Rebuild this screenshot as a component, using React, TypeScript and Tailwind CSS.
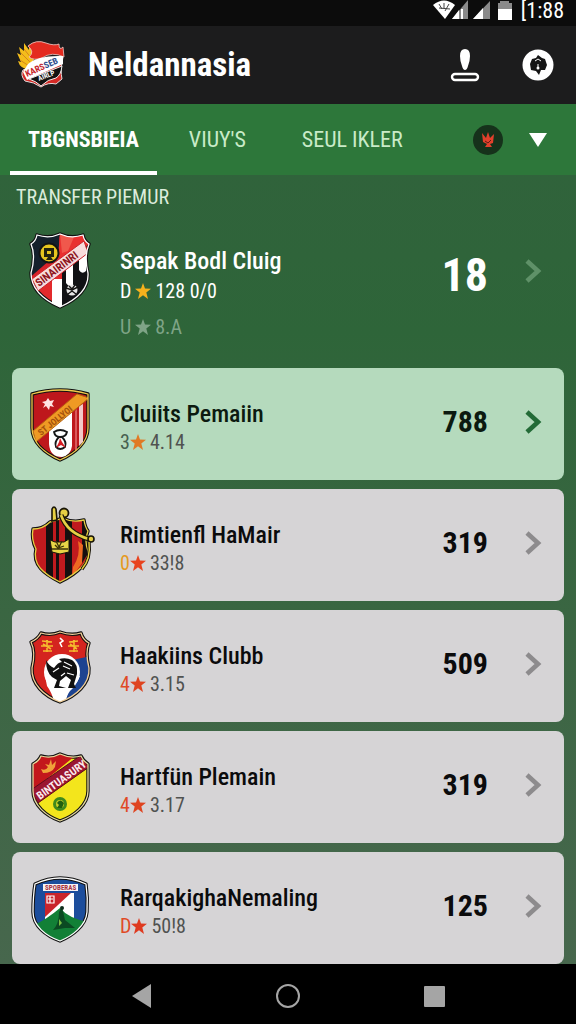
import React, { useState } from 'react';

type Tone = 'featured' | 'active' | 'plain';

interface Club {
  name: string;
  grade: string;
  gradeColor: string;
  starColor: string;
  rating: string;
  extra?: string[];
  score: string;
  tone: Tone;
  crest: React.ReactNode;
}

interface ShieldProps {
  id: string;
  path: string;
  base: string;
  outer?: string;
  inner?: string;
  children: React.ReactNode;
  over?: React.ReactNode;
}

function Shield({ id, path, base, outer = '#111', inner = '#fff', children, over }: ShieldProps) {
  return (
    <svg viewBox="0 0 64 80" className="h-20 w-16 shrink-0 overflow-visible" aria-hidden="true">
      <clipPath id={id}>
        <path d={path} />
      </clipPath>
      <path d={path} fill={base} stroke={outer} strokeWidth="3.4" strokeLinejoin="round" />
      <g clipPath={`url(#${id})`}>{children}</g>
      <path d={path} fill="none" stroke={inner} strokeWidth="1.3" strokeLinejoin="round" />
      {over}
    </svg>
  );
}

const SCALLOPED = 'M9 4Q21 8 32 3Q43 8 55 4Q56 10 61 13Q56 25 60 42C61 58 48 69 32 76C16 69 3 58 3 42Q8 25 3 13Q8 10 9 4Z';
const ROUNDED = 'M4 10Q18 6 32 6Q46 6 60 10V44C60 58 48 69 32 76C16 69 4 58 4 44Z';
const NOTCHED = 'M13 9Q23 12 32 7Q43 12 53 9Q55 14 60 17V44C60 58 46 69 32 74C18 69 5 58 5 44V17Q11 14 13 9Z';

function CrestSepak() {
  return (
    <Shield id="sepak" path={SCALLOPED} base="#e32a2c">
      <path d="M0 0H32L30 28L4 48H0Z" fill="#15202c" />
      <path d="M32 0L64 0V12L30 30Z" fill="#e9302f" />
      <path d="M32 3L46 6L40 20L34 22Z" fill="#f0584c" />
      <path d="M0 48L30 22L34 30L6 52Z" fill="#d8232a" />
      <path d="M24 48H34V80H24Z" fill="#fff" />
      <path d="M34 36L64 16V80H34Z" fill="#101114" />
      <path d="M38 36L45 31V54Q41 57 38 52Z" fill="#fff" />
      <path d="M51 28L58 22V40Q54 44 51 39Z" fill="#fff" />
      <path d="M4 48L56 10L60 22L10 60Z" fill="#f7dcdc" stroke="#c9242b" />
      <text transform="translate(11 56) rotate(-37)" fontSize="11" fontWeight="700" fill="#8d1420" fontFamily="Roboto Condensed, Roboto, sans-serif">
        SINAIRINRI
      </text>
      <circle cx="21" cy="22" r="9.5" fill="#e6c51f" stroke="#141414" strokeWidth="2" />
      <path d="M16 17H26V26H23L25 29H18L20 26H16ZM19 20V23H23V20Z" fill="#23230f" fillRule="evenodd" />
      <circle cx="44" cy="59" r="5.5" fill="#e8e8e8" />
      <path d="M38 57L44 59L50 56M40 63L44 60L48 63M41 55L44 58L47 54" stroke="#111" fill="none" strokeWidth="1.4" />
    </Shield>
  );
}

function CrestPemain() {
  return (
    <Shield id="pemain" path={ROUNDED} base="#be171c" inner="#f2c94c">
      <path d="M51 22L55 20V58L51 62Z" fill="#f3c9c9" />
      <path d="M47 27L49 25V66L47 68Z" fill="#d9595b" />
      <path d="M21 44L44 28V62Q43 71 34 73Q22 73 21 60Z" fill="#fff" />
      <path d="M5 47L49 10L61 14L8 58Z" fill="#ef9a24" stroke="#b96312" />
      <text transform="translate(13 52) rotate(-39)" fontSize="9" fontWeight="700" fill="#a4520d" fontFamily="Roboto Condensed, Roboto, sans-serif">
        ST JOLLYOI
      </text>
      <path d="M14 18L18 17L20 14L22 17L26 16L24 20L26 23L22 22L21 26L18 22L15 24L17 20Z" fill="#ffe4e2" />
      <path d="M26 48Q32 44 39 48Q38 53 32 53Q27 53 26 48ZM31 53Q26 58 28 63Q32 67 37 63Q39 58 34 53" fill="none" stroke="#171717" strokeWidth="1.8" />
      <path d="M32 54L34 58L38 64L33 61L28 64L31 58Z" fill="#d61c22" />
    </Shield>
  );
}

function CrestMair() {
  return (
    <Shield
      id="mair"
      path="M5 24Q15 24 22 17Q28 16 34 13Q45 18 56 15Q57 22 60 26Q56 36 60 46C61 60 46 70 32 77C16 69 4 60 8 44Q3 34 5 24Z"
      base="#a5161b"
      inner="#e6d044"
      over={
        <>
          <path d="M24 16V4Q26 0 28 4L29 15Z" fill="#e6d044" stroke="#191507" strokeWidth="1.6" />
          <circle cx="36" cy="8" r="4.5" fill="#e6d044" stroke="#191507" strokeWidth="1.8" />
          <path d="M33 10Q39 28 61 34" fill="none" stroke="#191507" strokeWidth="5" />
          <path d="M33 10Q39 28 61 34" fill="none" stroke="#e6d044" strokeWidth="2.6" />
          <circle cx="63" cy="34" r="3" fill="#e6d044" stroke="#191507" strokeWidth="1.6" />
          <path d="M61 37Q63 54 54 64" fill="none" stroke="#191507" strokeWidth="3.4" />
          <path d="M61 37Q63 54 54 64" fill="none" stroke="#e6d044" strokeWidth="1.4" />
        </>
      }
    >
      <path d="M0 0H64V80H0Z" fill="#c01a1e" />
      <path d="M18 10H25V80H18ZM28 10H31V80H28ZM37 10H44V80H37ZM54 10H64V42L54 58Z" fill="#150f10" />
      <path d="M45 62Q53 50 50 36L55 40L54 58L44 72Z" fill="#ee6a22" />
      <path d="M22 35L27 37H36L41 34V47L32 49L24 47Z" fill="#e8d547" stroke="#191507" />
      <path d="M28 36L31 42L34 36M24 44H40M27 40L30 43L36 41" stroke="#3a3208" fill="none" strokeWidth="1.3" />
    </Shield>
  );
}

function CrestHaaking() {
  return (
    <Shield
      id="haaking"
      path="M13 7Q23 10 32 6Q43 10 53 7Q55 14 61 17Q57 26 61 42C62 58 48 70 32 76C16 70 3 58 4 42Q8 26 3 16Q10 13 13 7Z"
      base="#d4241f"
      inner="#f1cf9a"
    >
      <path d="M44 34L64 30V80H32Z" fill="#1d4390" />
      <path d="M17 50H52Q48 60 42 65Q38 70 37 80H27Q25 68 19 60Z" fill="#fff" />
      <circle cx="34" cy="46" r="18" fill="#fff" />
      <path d="M18 34Q21 40 26 42Q30 36 34 36L31 33Q38 31 44 34Q50 38 49 48L46 58L48 62H40L43 54L38 50L32 55L31 60L38 62H26L29 54L24 51Q18 46 18 34Z" fill="#111" />
      <path d="M36 36L44 40M35 40L42 43M39 47L46 49M25 46L31 42M33 50L37 47" stroke="#fff" strokeWidth="1.2" />
      <path d="M14 15L24 16M13 20H25M15 25H24M19 14V26M15 18L23 23M41 16L50 15M40 20H51M41 25H50M46 14V26M42 18L49 23" stroke="#f5b92e" strokeWidth="1.6" />
      <path d="M32 12L35 15L32 17L34 21" stroke="#fff" strokeWidth="1.6" fill="none" />
    </Shield>
  );
}

function CrestPlemain() {
  return (
    <Shield id="plemain" path={NOTCHED} base="#f3e51c" inner="#e8dca0">
      <path d="M0 0H58L4 44Z" fill="#c3171c" />
      <path d="M3 43L52 9L61 20L10 56Z" fill="#9b1530" stroke="#5f0c1c" />
      <text transform="translate(12 53) rotate(-36)" fontSize="11" fontWeight="700" fill="#fbe9ec" fontFamily="Roboto Condensed, Roboto, sans-serif">
        BINTUASURY
      </text>
      <path d="M13 22Q18 24 20 20L17 17L21 18L23 12L24 18L28 14L27 20Q24 26 15 26Z" fill="#f0a33a" />
      <circle cx="32" cy="57" r="7" fill="#3f8a1d" />
      <circle cx="32" cy="57" r="4" fill="#c7cf26" />
      <path d="M29 56Q32 51 36 56L34 61H29L31 58Z" fill="#22610f" />
    </Shield>
  );
}

function CrestNemaling() {
  return (
    <Shield id="nemaling" path="M7 16Q20 10 32 10Q45 10 58 16Q60 30 59 44C58 58 44 68 32 73C18 68 5 58 5 44Q5 28 7 16Z" base="#1c4d9c">
      <path d="M17 25H46V60H17Z" fill="#fff" />
      <path d="M17 25H43L17 49Z" fill="#c9242b" />
      <path d="M19 28H26V35H19ZM20 31H25M22 28V35" fill="none" stroke="#fff" strokeWidth="1.2" />
      <path d="M4 58Q18 52 32 40Q40 50 60 54V80H0Z" fill="#128036" />
      <path d="M25 62Q31 56 31 44L34 39L37 52L47 60L37 60Z" fill="#0b4a22" />
      <circle cx="34" cy="40" r="2" fill="#0d2b1a" />
      <path d="M31 51L34 55L31 58Z" fill="#7bc043" />
      <rect x="15" y="16" width="35" height="7" fill="#f5f2f4" />
      <text x="17" y="22" fontSize="7" fontWeight="700" fill="#a9323f" fontFamily="Roboto Condensed, Roboto, sans-serif">
        SPOBERAS
      </text>
    </Shield>
  );
}

function TeamLogo() {
  return (
    <svg viewBox="0 0 52 52" className="size-[52px] shrink-0" aria-hidden="true">
      <path d="M14 31Q4 30 2 22L5 23L1 14L5 16L3 8L8 12L8 4L13 11L13 5Q18 12 18 20Z" fill="#f4bd1b" />
      <path d="M5 14L15 24M8 10L16 20M4 21L13 27" stroke="#d6851a" strokeWidth="1" />
      <path d="M7 31L47 18Q44 32 46 40L40 45Q32 43 25 48Q18 43 9 42Q4 36 7 31Z" fill="#d42a26" stroke="#e5dcdc" />
      <path d="M12 7Q20 0 30 4Q38 7 43 5Q43 12 47 8L48 18Q36 12 26 19Q18 22 13 18Q19 13 12 7Z" fill="#e42b20" stroke="#f0cfca" strokeWidth="0.8" />
      <path d="M12 25Q22 16 47 17L47 25L11 41L7 33Z" fill="#fff" />
      <path d="M13 40L46 27Q45 36 40 39Q32 40 25 47Q20 42 13 40Z" fill="#121212" stroke="#eee" strokeWidth="1" />
      <text transform="translate(11 38) rotate(-24)" fontSize="9" fontWeight="700" fill="#c5262d" fontFamily="Roboto Condensed, Roboto, sans-serif">
        KARS<tspan fill="#2b4a8a">SEB</tspan>
      </text>
      <text transform="translate(23 42) rotate(-21)" fontSize="7" fontWeight="700" fill="#fff" fontFamily="Roboto Condensed, Roboto, sans-serif">
        AIRLP
      </text>
    </svg>
  );
}

function Star({ color }: { color: string }) {
  return (
    <svg viewBox="0 0 16 16" className="size-4" aria-hidden="true">
      <path d="M8 0L10 5.6L16 5.8L11.3 9.5L13 16L8 12.3L3 16L4.7 9.5L0 5.8L6 5.6Z" fill={color} />
    </svg>
  );
}

const CLUBS: Club[] = [
  { name: 'Sepak Bodl Cluig', grade: 'D', gradeColor: 'text-white', starColor: '#f5b21d', rating: '128 0/0', extra: ['U', '8.A'], score: '18', tone: 'featured', crest: <CrestSepak /> },
  { name: 'Cluiits Pemaiin', grade: '3', gradeColor: 'text-[#47604f]', starColor: '#e07a25', rating: '4.14', score: '788', tone: 'active', crest: <CrestPemain /> },
  { name: 'Rimtienfl HaMair', grade: '0', gradeColor: 'text-[#e59a1f]', starColor: '#e8431f', rating: '33!8', score: '319', tone: 'plain', crest: <CrestMair /> },
  { name: 'Haakiins Clubb', grade: '4', gradeColor: 'text-[#e04a26]', starColor: '#df4420', rating: '3.15', score: '509', tone: 'plain', crest: <CrestHaaking /> },
  { name: 'Hartfün Plemain', grade: '4', gradeColor: 'text-[#e04a26]', starColor: '#df4420', rating: '3.17', score: '319', tone: 'plain', crest: <CrestPlemain /> },
  { name: 'RarqakighaNemaling', grade: 'D', gradeColor: 'text-[#e04a26]', starColor: '#df3a20', rating: '50!8', score: '125', tone: 'plain', crest: <CrestNemaling /> },
];

const CARD: Record<Tone, string> = {
  featured: 'pt-5 pb-4 items-start text-white',
  active: 'py-4 items-center bg-[#b5dabd] text-[#0c1a10]',
  plain: 'py-4 items-center bg-[#d6d4d6] text-[#0b0b0c]',
};

const CHEVRON: Record<Tone, string> = {
  featured: 'text-[#5f9168]',
  active: 'text-[#236b37]',
  plain: 'text-[#8d8b8d]',
};

function ClubRow({ club }: { club: Club }) {
  const featured = club.tone === 'featured';
  return (
    <li>
      <a href="#" className={`flex rounded-lg px-4 ${CARD[club.tone]}`}>
        {club.crest}
        <div className={`ml-7 min-w-0 flex-1 ${featured ? 'pt-4' : 'pt-2'}`}>
          <h2 className="truncate text-2xl leading-7 font-medium">{club.name}</h2>
          <p className={`flex items-center text-xl ${featured ? 'gap-1 leading-8' : 'leading-7'}`}>
            <span className={club.gradeColor}>{club.grade}</span>
            <Star color={club.starColor} />
            <span className={featured ? 'text-white' : 'ml-1 text-[#505250]'}>{club.rating}</span>
          </p>
          {club.extra && (
            <p className="mt-1 flex items-center gap-1 text-xl leading-8 text-[#7fa487]">
              <span>{club.extra[0]}</span>
              <Star color="#7fa487" />
              <span>{club.extra[1]}</span>
            </p>
          )}
        </div>
        <span className={featured ? 'pt-4 text-[46px] leading-[56px] font-bold' : 'pb-1 text-[30px] leading-8 font-bold'}>{club.score}</span>
        <svg viewBox="0 0 32 32" className={`ml-7 size-8 shrink-0 ${featured ? 'mt-6' : 'mb-1'} ${CHEVRON[club.tone]}`} aria-hidden="true">
          <path d="M11 6L22 16L11 26" fill="none" stroke="currentColor" strokeWidth="4.6" />
        </svg>
      </a>
    </li>
  );
}

function StatusBar() {
  return (
    <div className="flex h-[26px] items-start justify-end bg-[#0c0c0c] pr-3 text-white">
      <svg viewBox="0 0 80 20" className="h-5 w-20" aria-hidden="true">
        <path d="M0 5Q11 -4 22 5L12 19Z" fill="#fff" />
        <path d="M6 4L9 9M11 3V8M16 4L12 11M6 8L17 9" fill="none" stroke="#444" strokeWidth="1" />
        <path d="M35 0V19H19Z" fill="#8a8a8a" />
        <path d="M26 10V19H19ZM28 9H30V19H28Z" fill="#fff" />
        <path d="M57 1V19H40Z" fill="#8a8a8a" />
        <path d="M50 8V19H40Z" fill="#fff" />
        <path d="M67 1H76V3H79V9H65V3H67Z" fill="#8a8a8a" />
        <path d="M65 9H79V20H65Z" fill="#fff" />
      </svg>
      <span className="ml-2 text-[22px] leading-[22px]">[1:88</span>
    </div>
  );
}

export default function App() {
  const [tab, setTab] = useState(0);
  const tabs = ['TBGNSBIEIA', "VIUY'S", 'SEUL IKLER'];

  return (
    <div className="flex min-h-screen flex-col bg-[#2b6637] font-['Roboto_Condensed','Liberation_Sans_Narrow',Roboto,sans-serif]">
      <StatusBar />

      {/* Title bar */}
      <header className="flex items-center bg-[#1c1c1d] py-[13px] pr-5 pl-4 text-white">
        <TeamLogo />
        <h1 className="ml-5 flex-1 text-[33px] leading-[52px] font-bold">Neldannasia</h1>
        <button type="button" aria-label="Stamp">
          <svg viewBox="0 0 32 36" className="h-9 w-8" aria-hidden="true">
            <path d="M17 2Q22 2 22 9Q22 14 20 19Q19 23 17 23Q15 23 14 19Q12 14 12 9Q12 2 17 2Z" fill="#fff" />
            <rect x="4" y="27" width="26" height="6" rx="3" fill="none" stroke="#fff" strokeWidth="2.4" />
          </svg>
        </button>
        <button type="button" aria-label="Profile" className="ml-10">
          <svg viewBox="0 0 36 36" className="size-9" aria-hidden="true">
            <circle cx="18" cy="18" r="15.5" fill="#fff" />
            <path d="M18 8L22 11L25 12L27 18L25 23L21 23L19 28L16 24L11 23L10 17L12 12L16 11Z" fill="#141414" />
            <path d="M15 14L18 12L21 14M18 17V21" stroke="#fff" strokeWidth="1" fill="none" />
            <circle cx="18" cy="21" r="1.5" fill="#fff" />
          </svg>
        </button>
      </header>

      <nav className="flex items-stretch bg-[#2d773a] pr-7 pl-2.5 text-[#c9ebc8]">
        {tabs.map((label, i) => (
          <button
            key={label}
            type="button"
            onClick={() => setTab(i)}
            className={`border-b-4 pt-5 pb-[15px] text-[22px] leading-8 whitespace-nowrap ${i === 0 ? 'mr-1 px-[18px]' : 'px-7'} ${
              tab === i ? 'border-white font-bold text-white' : 'border-transparent'
            }`}
          >
            {label}
          </button>
        ))}
        <div className="ml-auto flex items-center gap-6">
          <button type="button" aria-label="League">
            <svg viewBox="0 0 32 32" className="size-8" aria-hidden="true">
              <circle cx="16" cy="16" r="15" fill="#16321b" />
              <path d="M10 9L14 14L16 8L18 14L22 10L21 19L18 20L20 23H13L15 20L11 18Z" fill="#e2402c" />
              <path d="M13 17L16 19L19 16" stroke="#5a1d14" fill="none" />
            </svg>
          </button>
          <button type="button" aria-label="More">
            <svg viewBox="0 0 20 16" className="h-4 w-5" aria-hidden="true">
              <path d="M1 1H19L10 15Z" fill="#fff" />
            </svg>
          </button>
        </div>
      </nav>

      <main className="flex-1 bg-linear-to-b from-[#30633b] via-[#2e6539] via-20% to-[#47674d] px-3">
        <p className="px-1 pt-2 text-xl leading-7 text-[#dcecdc]">TRANSFER PIEMUR</p>
        <ul className="flex flex-col gap-[9px]">
          {CLUBS.map((club) => (
            <ClubRow key={club.name} club={club} />
          ))}
        </ul>
      </main>

      <footer className="flex items-center justify-center gap-[122px] bg-black pt-5 pb-4 text-[#a5a5a5]">
        <button type="button" aria-label="Back">
          <svg viewBox="0 0 24 24" className="size-6" aria-hidden="true">
            <path d="M21 0V24L2 12Z" fill="currentColor" />
          </svg>
        </button>
        <button type="button" aria-label="Home">
          <svg viewBox="0 0 24 24" className="size-6" aria-hidden="true">
            <circle cx="12" cy="12" r="11" fill="none" stroke="currentColor" strokeWidth="2" />
          </svg>
        </button>
        <button type="button" aria-label="Recent">
          <svg viewBox="0 0 24 24" className="size-6" aria-hidden="true">
            <rect x="2" y="2" width="21" height="21" rx="1" fill="currentColor" />
          </svg>
        </button>
      </footer>
    </div>
  );
}
